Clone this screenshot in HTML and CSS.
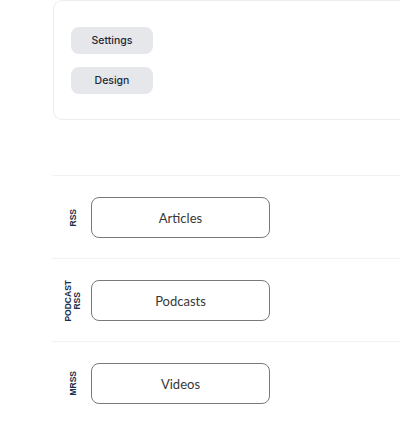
FILE: index.html
```html
<!DOCTYPE html>
<html lang="en">
<head>
  <meta charset="UTF-8" />
  <meta name="viewport" content="width=device-width, initial-scale=1.0">
  <title>Feeds</title>
<link rel="stylesheet" href="styles.css">
</head>
<body>
  <div class="page">
    <div class="card">
      <button class="pill">Settings</button>
      <button class="pill">Design</button>
    </div>

    <div class="feeds">
      <div class="feed">
        <div class="feed-label"><span>RSS</span></div>
        <button class="feed-btn">Articles</button>
      </div>
      <div class="feed">
        <div class="feed-label"><span>Podcast<br>RSS</span></div>
        <button class="feed-btn">Podcasts</button>
      </div>
      <div class="feed">
        <div class="feed-label"><span>MRSS</span></div>
        <button class="feed-btn">Videos</button>
      </div>
    </div>
  </div>
</body>
</html>
```

FILE: styles.css
```css
body {
  margin: 0;
  background: #fff;
  overflow: hidden;
  font-family: "Liberation Sans", Arial, sans-serif;
}

.page {
  padding-left: 52px;
}

/* card runs off the right edge, so no right border */
.card {
  margin-left: 1px;
  border: 1px solid #efede9;
  border-right: none;
  border-radius: 9px 0 0 9px;
  padding: 26px 17px 25px;
  display: flex;
  flex-direction: column;
  align-items: flex-start;
  gap: 13px;
}

.pill {
  width: 82px;
  height: 27px;
  border: none;
  border-radius: 8px;
  background: #e5e7eb;
  color: #1f2937;
  font-family: Inter, "Noto Sans", sans-serif;
  font-size: 10.5px;
  font-weight: 500;
  padding: 0;
}

.feeds {
  margin-top: 55px;
}

.feed {
  display: flex;
  align-items: center;
  border-top: 1px solid #f2f2f2;
  padding: 21px 0 20px;
}

.feed-label {
  width: 39px;
  height: 41px;
  padding-left: 3px;
  box-sizing: border-box;
  display: flex;
  align-items: center;
  justify-content: center;
}

.feed-label span {
  writing-mode: vertical-rl;
  transform: rotate(180deg);
  text-transform: uppercase;
  text-align: center;
  font-size: 8.5px;
  font-weight: 700;
  line-height: 9px;
  color: #15304f;
}

.feed-btn {
  width: 179px;
  height: 41px;
  border: 1px solid #7a7a7a;
  border-radius: 8px;
  background: #fff;
  color: #383838;
  font-family: Lato, "Open Sans", sans-serif;
  font-size: 13px;
  padding: 0;
}
```
